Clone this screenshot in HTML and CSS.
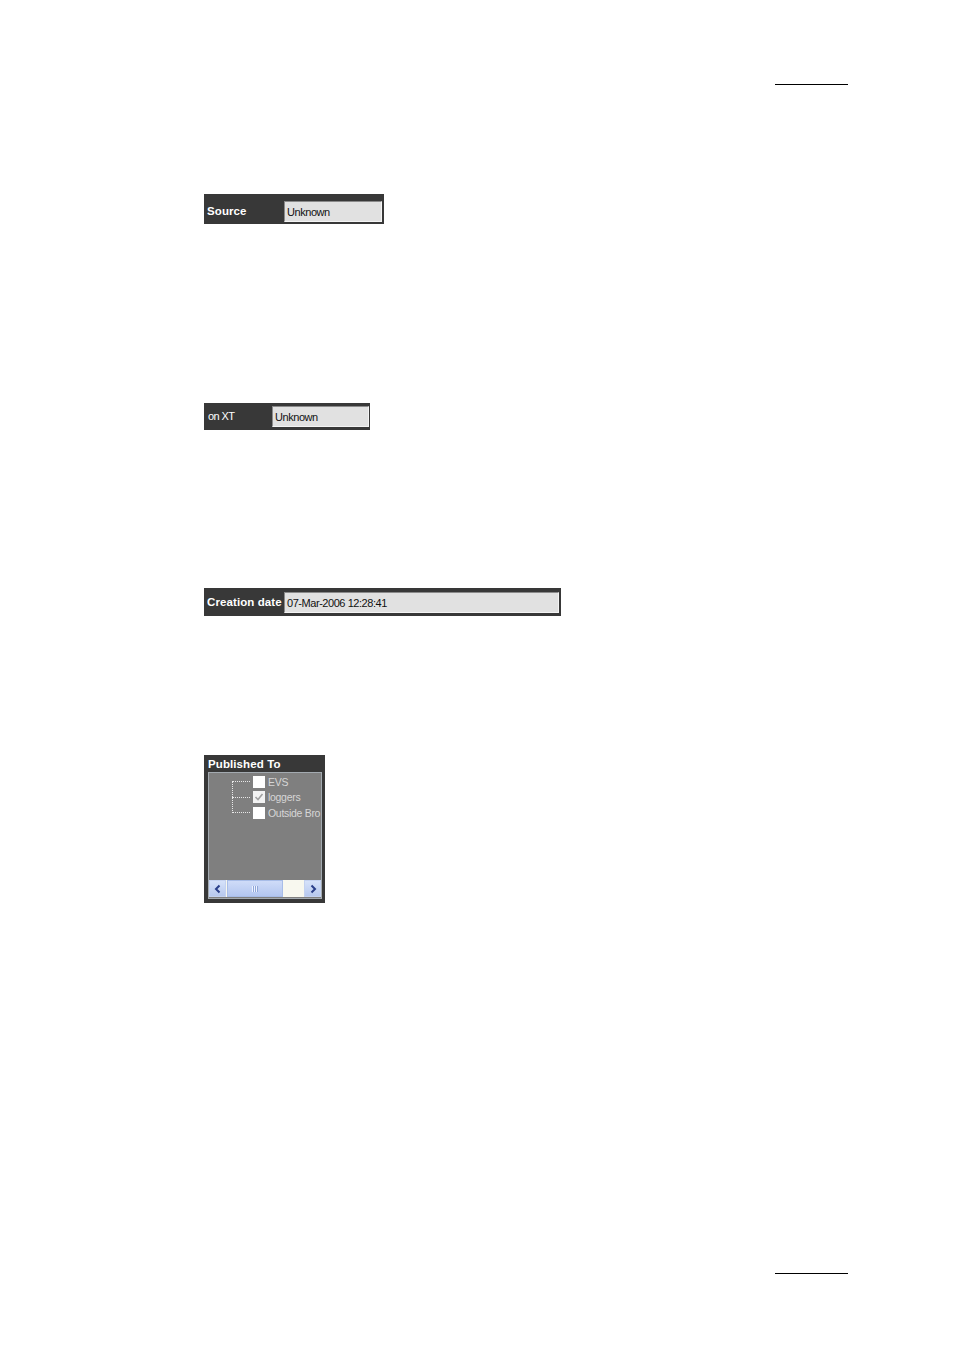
FILE: index.html
```html
<!DOCTYPE html>
<html>
<head>
<meta charset="utf-8">
<link rel="stylesheet" href="styles.css">
</head>
<body>
<div class="page">
  <div class="rule rule-top"></div>

  <div class="field field-source">
    <span class="label bold">Source</span>
    <span class="input w-source">Unknown</span>
  </div>

  <div class="field field-xt">
    <span class="label plain">on XT</span>
    <span class="input w-xt">Unknown</span>
  </div>

  <div class="field field-date">
    <span class="label bold">Creation date</span>
    <span class="input w-date">07-Mar-2006 12:28:41</span>
  </div>

  <div class="published">
    <div class="pub-title">Published To</div>
    <div class="pub-panel">
      <div class="tree">
        <div class="tree-line"></div>
        <div class="tree-row"><span class="dash"></span><span class="cb"></span><span class="tl">EVS</span></div>
        <div class="tree-row"><span class="dash"></span><span class="cb checked"><svg width="10" height="10" viewBox="0 0 10 10"><path d="M1.5 5 L4 7.5 L8.5 2" fill="none" stroke="#a0a0a0" stroke-width="1.6"/></svg></span><span class="tl">loggers</span></div>
        <div class="tree-row"><span class="dash"></span><span class="cb"></span><span class="tl">Outside Bro</span></div>
      </div>
      <div class="scrollbar">
        <span class="sbtn"><svg width="10" height="10" viewBox="0 0 10 10"><path d="M6.5 1.5 L3 5 L6.5 8.5" fill="none" stroke="#2a3f8a" stroke-width="2"/></svg></span>
        <span class="thumb"><span class="grip"></span></span>
        <span class="track"></span>
        <span class="sbtn"><svg width="10" height="10" viewBox="0 0 10 10"><path d="M3.5 1.5 L7 5 L3.5 8.5" fill="none" stroke="#2a3f8a" stroke-width="2"/></svg></span>
      </div>
    </div>
  </div>

  <div class="rule rule-bottom"></div>
</div>
</body>
</html>
```

FILE: styles.css
```css
html, body {
  margin: 0;
  padding: 0;
  background: #ffffff;
}

.page {
  width: 954px;
  height: 1350px;
  padding-top: 84px;
  box-sizing: border-box;
  font-family: "Liberation Sans", Arial, sans-serif;
}

.rule {
  margin-left: 775px;
  width: 73px;
  height: 0;
  border-top: 1px solid #000;
}

.rule-bottom {
  margin-top: 370px;
}

.field {
  display: flex;
  align-items: flex-end;
  margin-left: 204px;
  background: #383838;
  box-sizing: border-box;
}

.field-source {
  margin-top: 109px;
  width: 180px;
  height: 30px;
  padding-bottom: 2px;
}

.field-xt {
  margin-top: 179px;
  width: 166px;
  height: 27px;
  padding-bottom: 3px;
}

.field-date {
  margin-top: 158px;
  width: 357px;
  height: 28px;
  padding-bottom: 3px;
}

.label {
  color: #ffffff;
  font-size: 11.5px;
  height: 21px;
  line-height: 21px;
  padding-left: 3px;
  white-space: nowrap;
}

.label.bold {
  font-weight: bold;
  letter-spacing: 0.1px;
}

.label.plain {
  font-size: 11px;
  letter-spacing: -0.6px;
  padding-left: 4px;
}

.field-source .label { width: 77px; }
.field-xt .label { width: 64px; }
.field-date .label { width: 77px; }

.input {
  display: block;
  box-sizing: border-box;
  height: 21px;
  line-height: 20px;
  background: #e1e1e1;
  border-top: 1px solid #8a8a8a;
  border-left: 1px solid #8a8a8a;
  border-right: 1px solid #f4f4f4;
  border-bottom: 1px solid #f4f4f4;
  color: #111;
  font-size: 11px;
  letter-spacing: -0.45px;
  padding-left: 2px;
  white-space: nowrap;
}

.w-source { width: 98px; }
.w-xt { width: 97px; }
.w-date { width: 275px; }

.published {
  margin-top: 139px;
  margin-left: 204px;
  width: 121px;
  height: 148px;
  background: #383838;
  box-sizing: border-box;
  padding: 0 3px 4px 4px;
  display: flex;
  flex-direction: column;
}

.pub-title {
  color: #fff;
  font-weight: bold;
  font-size: 11.5px;
  height: 17px;
  line-height: 18px;
  letter-spacing: 0.1px;
  white-space: nowrap;
}

.pub-panel {
  flex: 1;
  background: #7f7f7f;
  border: 1px solid #a3aab0;
  display: flex;
  flex-direction: column;
  justify-content: space-between;
  overflow: hidden;
}

.tree {
  position: relative;
  padding-top: 1px;
  padding-left: 23px;
}

.tree-line {
  position: absolute;
  left: 23px;
  top: 8px;
  height: 32px;
  border-left: 1px dotted #e8e8e8;
}

.tree-row {
  display: flex;
  align-items: center;
  height: 15.5px;
}

.dash {
  width: 18px;
  height: 0;
  border-top: 1px dotted #e8e8e8;
  margin-right: 3px;
  flex-shrink: 0;
}

.cb {
  width: 12px;
  height: 12px;
  background: #ffffff;
  display: flex;
  align-items: center;
  justify-content: center;
  flex-shrink: 0;
}

.cb.checked {
  background: #f2f2f2;
}

.tl {
  margin-left: 3px;
  color: #d6d6d6;
  font-size: 10.5px;
  letter-spacing: -0.3px;
  white-space: nowrap;
}

.scrollbar {
  display: flex;
  height: 17px;
  margin: 0 0 1px 0;
  background: #f7f7ee;
}

.sbtn {
  width: 17px;
  height: 17px;
  background: linear-gradient(#d6e2fa, #b7c9ef);
  border: 1px solid #c4d2f0;
  box-sizing: border-box;
  display: flex;
  align-items: center;
  justify-content: center;
  flex-shrink: 0;
}

.thumb {
  width: 56px;
  margin-left: 1px;
  height: 17px;
  box-sizing: border-box;
  border: 1px solid #a8bde8;
  background: linear-gradient(#cfdcf8, #b3c6f0);
  display: flex;
  align-items: center;
  justify-content: center;
}

.grip {
  width: 6px;
  height: 6px;
  background: repeating-linear-gradient(90deg, #eef3ff 0 1px, #8fa6d8 1px 2px);
}

.track {
  flex: 1;
  background: #f8f8ef;
}
```
